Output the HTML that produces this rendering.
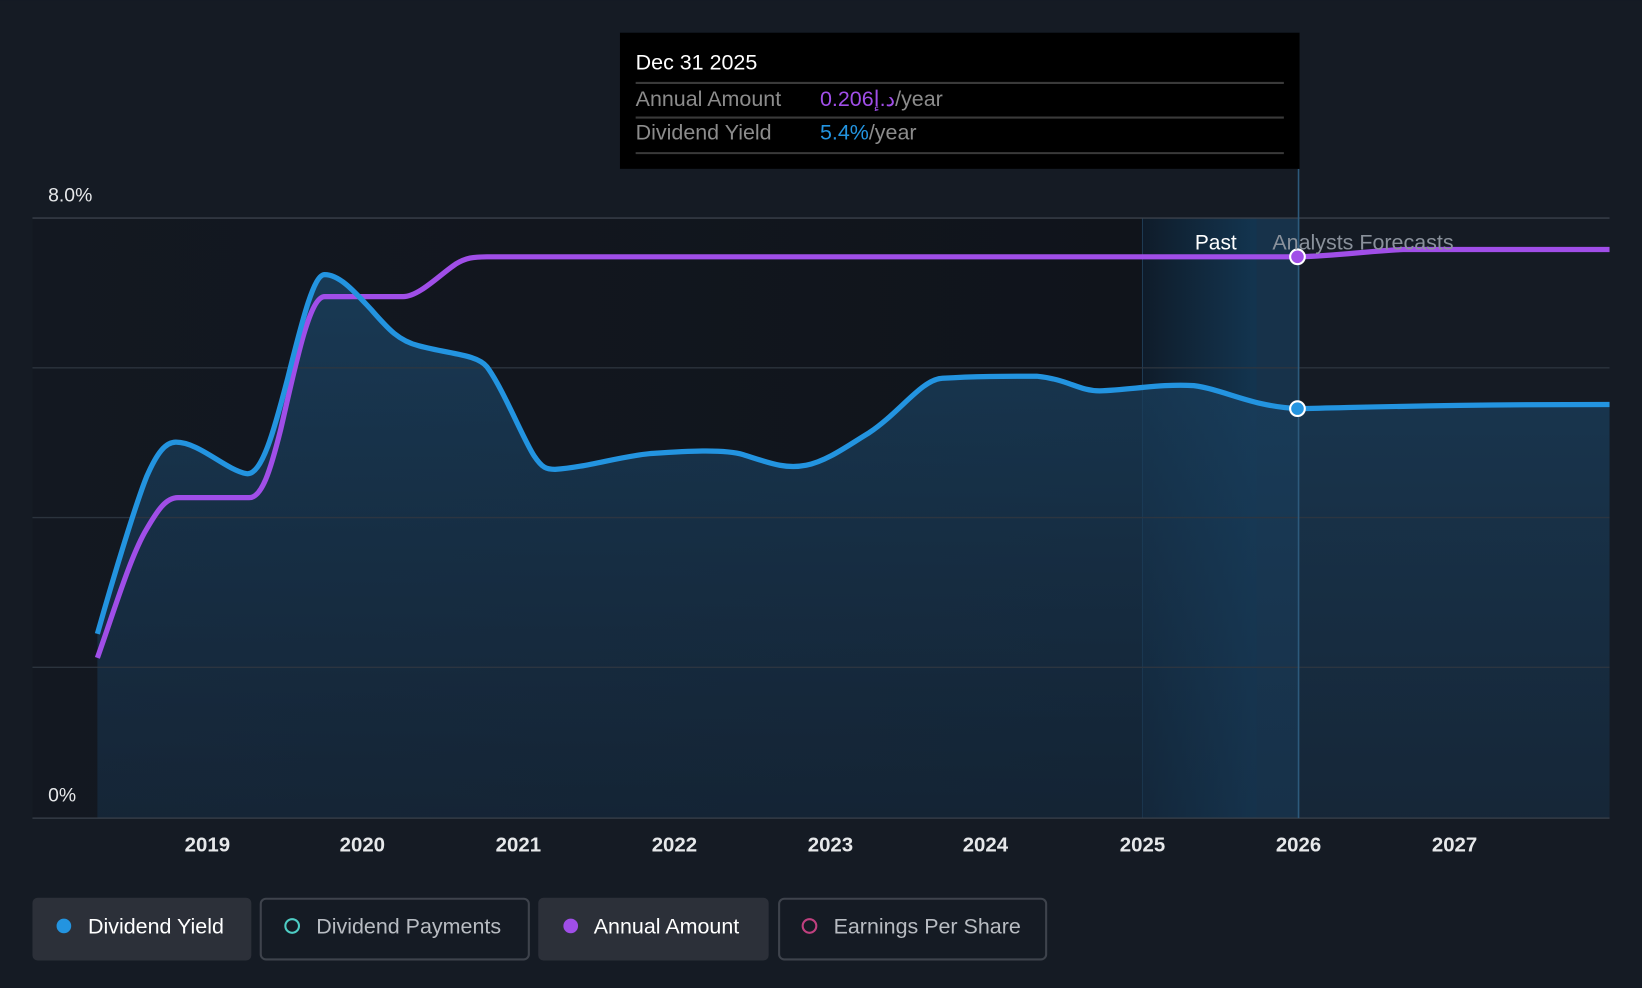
<!DOCTYPE html>
<html><head><meta charset="utf-8"><style>
html,body{margin:0;padding:0;background:#151b24;width:1642px;height:988px;overflow:hidden}
svg{display:block}
text{font-family:"Liberation Sans",sans-serif}
</style></head><body>
<svg width="1642" height="988" viewBox="0 0 1568 943" xmlns="http://www.w3.org/2000/svg">
<defs>
<linearGradient id="past" x1="0" x2="1" y1="0" y2="0">
<stop offset="0" stop-color="#131821"/><stop offset="1" stop-color="#10141b"/></linearGradient>
<linearGradient id="band" x1="0" x2="1" y1="0" y2="0">
<stop offset="0" stop-color="#0f1c2a"/><stop offset="1" stop-color="#133550"/></linearGradient>
<linearGradient id="fill" x1="0" x2="0" y1="0" y2="1">
<stop offset="0" stop-color="#1a4262" stop-opacity="0.8"/><stop offset="1" stop-color="#173048" stop-opacity="0.55"/></linearGradient>
</defs>
<rect width="1568" height="943" fill="#151b24"/>
<rect x="31" y="208" width="1060" height="573" fill="url(#past)"/>
<rect x="1091" y="208" width="110" height="573" fill="url(#band)"/>
<rect x="1200" y="208" width="41" height="573" fill="#17324a"/>
<line x1="1091" y1="208" x2="1091" y2="781" stroke="#1e3a52" stroke-width="1"/>
<path d="M93,605 C110,545 130,480 140,455 C150,432 158,422 168,422 C190,422 215,448 235,452 C250,455 262,410 275,360 C290,300 300,262 310,262 C325,262 340,280 355,296 C370,313 380,325 400,330 C430,338 455,338 465,350 C480,370 500,420 510,435 C518,447 522,448 530,448 C560,446 590,436 620,433 C650,431 690,428 710,434 C735,442 750,448 770,444 C790,440 810,425 830,413 C860,393 880,362 900,361 C930,359 960,359 990,359 C1020,362 1030,373 1050,373 C1080,372 1110,366 1140,368 C1170,372 1195,388 1240,390 C1300,389 1360,386 1537,386 L1537,781 L93,781 Z" fill="url(#fill)"/>
<g stroke="#2f3640" stroke-width="1.2">
<line x1="31" y1="208" x2="1537" y2="208" stroke="#3a414b"/>
<line x1="31" y1="351" x2="1537" y2="351" stroke-opacity="0.9"/>
<line x1="31" y1="494" x2="1537" y2="494" stroke-opacity="0.9"/>
<line x1="31" y1="637" x2="1537" y2="637" stroke-opacity="0.9"/>
<line x1="31" y1="781" x2="1537" y2="781" stroke="#3a414b"/>
</g>
<line x1="1240" y1="161" x2="1240" y2="781" stroke="#2d5a7c" stroke-width="1.5"/>
<path d="M93,628 C110,580 125,530 140,505 C150,488 158,475 170,475 L238,475 C250,475 258,450 268,410 C282,350 295,283 310,283 L385,283 C400,283 420,262 435,252 C445,246 452,245 465,245 L1240,245 C1280,244 1300,240 1340,238 L1537,238" fill="none" stroke="#a04ee8" stroke-width="5" stroke-linejoin="round"/>
<path d="M93,605 C110,545 130,480 140,455 C150,432 158,422 168,422 C190,422 215,448 235,452 C250,455 262,410 275,360 C290,300 300,262 310,262 C325,262 340,280 355,296 C370,313 380,325 400,330 C430,338 455,338 465,350 C480,370 500,420 510,435 C518,447 522,448 530,448 C560,446 590,436 620,433 C650,431 690,428 710,434 C735,442 750,448 770,444 C790,440 810,425 830,413 C860,393 880,362 900,361 C930,359 960,359 990,359 C1020,362 1030,373 1050,373 C1080,372 1110,366 1140,368 C1170,372 1195,388 1240,390 C1300,389 1360,386 1537,386" fill="none" stroke="#2394e0" stroke-width="5" stroke-linejoin="round"/>
<circle cx="1239" cy="245" r="7" fill="#a04ee8" stroke="#fff" stroke-width="2"/>
<circle cx="1239" cy="390" r="7" fill="#2394e0" stroke="#fff" stroke-width="2"/>
<text x="1141" y="238" fill="#fff" font-size="20">Past</text>
<text x="1215" y="238" fill="#8a919b" font-size="20.5">Analysts Forecasts</text>
<text x="46" y="192" fill="#e6e8ea" font-size="18.5">8.0%</text>
<text x="46" y="765" fill="#e6e8ea" font-size="18.5">0%</text>
<g fill="#e6e8ea" font-size="19.5" text-anchor="middle" font-weight="bold">
<text x="198" y="813">2019</text><text x="346" y="813">2020</text><text x="495" y="813">2021</text><text x="644" y="813">2022</text><text x="793" y="813">2023</text><text x="941" y="813">2024</text><text x="1091" y="813">2025</text><text x="1240" y="813">2026</text><text x="1389" y="813">2027</text>
</g>
<rect x="592" y="31" width="649" height="130" fill="#000"/>
<text x="607" y="66" fill="#fff" font-size="20.5">Dec 31 2025</text>
<line x1="607" y1="79" x2="1226" y2="79" stroke="#3a3a3a" stroke-width="2"/>
<text x="607" y="101" fill="#8c8c8c" font-size="20.5">Annual Amount</text>
<text x="783" y="101" font-size="20.5"><tspan fill="#a04ee8">0.206د.إ</tspan><tspan fill="#8c8c8c">/year</tspan></text>
<line x1="607" y1="112" x2="1226" y2="112" stroke="#3a3a3a" stroke-width="2"/>
<text x="607" y="133" fill="#8c8c8c" font-size="20.5">Dividend Yield</text>
<text x="783" y="133" font-size="20.5"><tspan fill="#2394e0">5.4%</tspan><tspan fill="#8c8c8c">/year</tspan></text>
<line x1="607" y1="146" x2="1226" y2="146" stroke="#3a3a3a" stroke-width="2"/>
<rect x="31" y="857" width="209" height="60" rx="5" fill="#2c3039"/>
<circle cx="61" cy="884" r="7" fill="#2394e0"/>
<text x="84" y="891" fill="#fff" font-size="20.5">Dividend Yield</text>
<rect x="249" y="858" width="256" height="58" rx="5" fill="none" stroke="#3e434c" stroke-width="2"/>
<circle cx="279" cy="884" r="6.5" fill="none" stroke="#4ecdc4" stroke-width="2"/>
<text x="302" y="891" fill="#b8bcc2" font-size="20.5">Dividend Payments</text>
<rect x="514" y="857" width="220" height="60" rx="5" fill="#2c3039"/>
<circle cx="545" cy="884" r="7" fill="#a04ee8"/>
<text x="567" y="891" fill="#fff" font-size="20.5">Annual Amount</text>
<rect x="744" y="858" width="255" height="58" rx="5" fill="none" stroke="#3e434c" stroke-width="2"/>
<circle cx="773" cy="884" r="6.5" fill="none" stroke="#c0407f" stroke-width="2"/>
<text x="796" y="891" fill="#b8bcc2" font-size="20.5">Earnings Per Share</text>
</svg>
</body></html>
